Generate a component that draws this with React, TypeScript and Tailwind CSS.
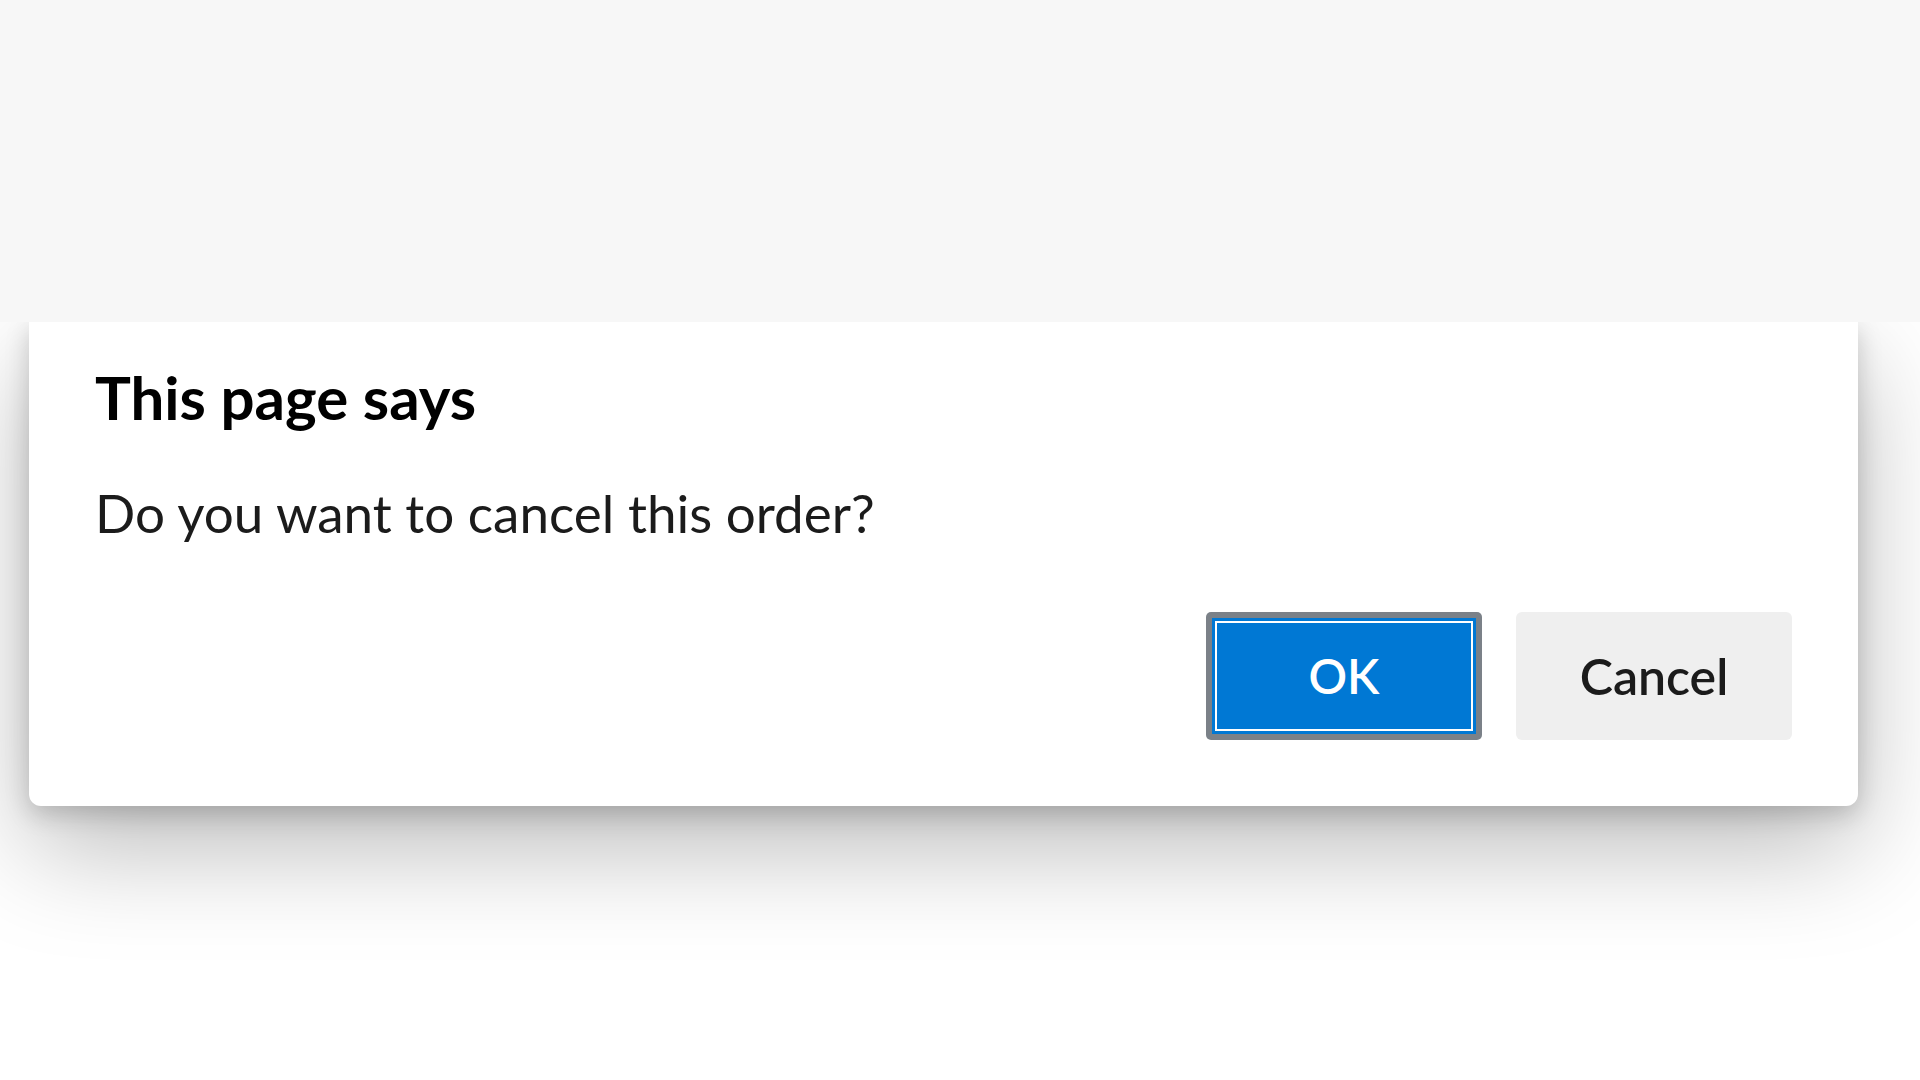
export default function App() {
  return (
    <div className="h-screen w-full overflow-hidden bg-white font-['Lato','Liberation_Sans',sans-serif]">
      {/* browser strip above the dialog */}
      <div className="relative z-10 h-[322px] bg-[#f7f7f7]" />

      {/* alert dialog */}
      <div className="relative z-0 mx-[29px] w-[1829px] h-[484px] rounded-b-[12px] bg-white shadow-[0_40px_110px_rgba(0,0,0,0.28),0_8px_24px_rgba(0,0,0,0.18)] px-[66px] pt-[45px] pb-[66px] flex flex-col">
        <h1 className="text-[60px] leading-[60px] font-bold text-black">This page says</h1>
        <p className="mt-[59px] text-[53px] leading-[54px] text-[#1b1b1b]">Do you want to cancel this order?</p>

        <div className="mt-auto flex justify-end gap-[34px]">
          <button className="w-[276px] h-[128px] rounded-[5px] bg-[#7b8188] p-[6px]">
            <div className="h-full w-full bg-[#0078d4] p-[3px]">
              <div className="h-full w-full border-2 border-white flex items-center justify-center text-[48px] font-semibold text-white">
                OK
              </div>
            </div>
          </button>
          <button className="w-[276px] h-[128px] rounded-[6px] bg-[#efefef] flex items-center justify-center text-[50px] font-semibold text-[#1b1b1b]">
            Cancel
          </button>
        </div>
      </div>
    </div>
  );
}
